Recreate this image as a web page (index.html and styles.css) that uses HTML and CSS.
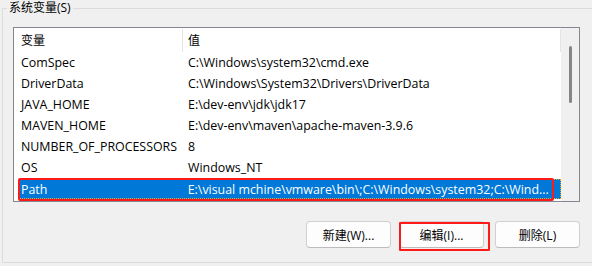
FILE: index.html
```html
<!DOCTYPE html>
<html>
<head>
<meta charset="utf-8">
<link rel="stylesheet" href="styles.css">
</head>
<body>
<fieldset class="group">
  <legend class="group-title">系统变量(S)</legend>
  <div class="listview">
    <div class="list-main">
      <div class="row header">
        <div class="cell c1">变量</div>
        <div class="cell c2">值</div>
      </div>
      <div class="row"><div class="cell c1">ComSpec</div><div class="cell c2">C:\Windows\system32\cmd.exe</div></div>
      <div class="row"><div class="cell c1">DriverData</div><div class="cell c2">C:\Windows\System32\Drivers\DriverData</div></div>
      <div class="row"><div class="cell c1">JAVA_HOME</div><div class="cell c2">E:\dev-env\jdk\jdk17</div></div>
      <div class="row"><div class="cell c1">MAVEN_HOME</div><div class="cell c2">E:\dev-env\maven\apache-maven-3.9.6</div></div>
      <div class="row"><div class="cell c1">NUMBER_OF_PROCESSORS</div><div class="cell c2">8</div></div>
      <div class="row"><div class="cell c1">OS</div><div class="cell c2">Windows_NT</div></div>
      <div class="row selected"><div class="cell c1">Path</div><div class="cell c2">E:\visual mchine\vmware\bin\;C:\Windows\system32;C:\Wind...</div><span class="mark mark-row"></span></div>
    </div>
    <div class="scrollbar"><div class="thumb"></div></div>
  </div>
  <div class="buttons">
    <button class="btn">新建(W)...</button>
    <button class="btn btn-edit">编辑(I)...<span class="mark mark-btn"></span></button>
    <button class="btn">删除(L)</button>
  </div>
</fieldset>
</body>
</html>
```
FILE: styles.css
```css
html, body {
  margin: 0;
  padding: 0;
  background: #f0f0f0;
}
body {
  padding-left: 2px;
  font-family: "Open Sans", "Noto Sans CJK SC", sans-serif;
  font-size: 12.4px;
  color: #000;
}
.group {
  box-sizing: border-box;
  width: 590px;
  height: 263px;
  margin: 0;
  padding: 0 12px 0 0;
  border: 1px solid #dcdcdc;
  border-radius: 0;
}
.group-title {
  margin-left: 4px;
  padding: 0 2px;
  line-height: 16px;
  height: 16px;
  font-size: 12px;
}
.listview {
  box-sizing: border-box;
  margin-top: 11px;
  margin-left: 10px;
  width: 567px;
  height: 175px;
  border: 1px solid #828790;
  background: #fff;
  display: flex;
}
.list-main {
  width: 547px;
  display: flex;
  flex-direction: column;
}
.row {
  position: relative;
  display: flex;
  height: 21px;
  align-items: center;
  white-space: nowrap;
}
.row.header {
  height: 24px;
}
.cell {
  box-sizing: border-box;
  overflow: hidden;
}
.c1 {
  width: 169px;
  padding-left: 7px;
}
.c2 {
  width: 378px;
  padding-left: 5px;
}
.header .cell {
  font-size: 12px;
}
.header .c1 {
  border-right: 1px solid #e5e5e5;
  height: 23px;
  line-height: 24px;
  margin-top: 1px;
}
.header .c2 {
  border-right: 1px solid #e5e5e5;
  height: 23px;
  line-height: 24px;
  margin-top: 1px;
}
.row.selected {
  margin-top: 1px;
  height: 20px;
  margin-left: 5px;
  width: 542px;
  background: #0078d7;
  color: #fff;
  box-sizing: border-box;
  border: 1px dotted #f5a623;
}
.row.selected .c1 {
  width: 163px;
  padding-left: 1px;
}
.mark {
  position: absolute;
  box-sizing: border-box;
  border: 2px solid #ff1a1a;
  border-radius: 2px;
  pointer-events: none;
}
.mark-row {
  left: -2px;
  top: -2px;
  width: 536px;
  height: 23px;
}
.scrollbar {
  width: 18px;
  background: #f0f0f0;
  display: flex;
  justify-content: center;
  padding-top: 18px;
  box-sizing: border-box;
}
.thumb {
  width: 3px;
  height: 57px;
  border-radius: 2px;
  background: #858585;
  margin-left: 1px;
}
.buttons {
  display: flex;
  justify-content: flex-end;
  gap: 8px;
  margin-top: 19px;
}
.btn {
  position: relative;
  box-sizing: border-box;
  width: 85px;
  height: 27px;
  padding: 0;
  font-family: "Open Sans", "Noto Sans CJK SC", sans-serif;
  font-size: 12px;
  color: #000;
  background: #fdfdfd;
  border: 1px solid #d0d0d0;
  border-bottom-color: #bcbcbc;
  border-radius: 4px;
}
.btn-edit {
  margin-right: 3px;
}
.mark-btn {
  left: -1px;
  top: 0;
  width: 91px;
  height: 29px;
  border-radius: 1px;
}
```
